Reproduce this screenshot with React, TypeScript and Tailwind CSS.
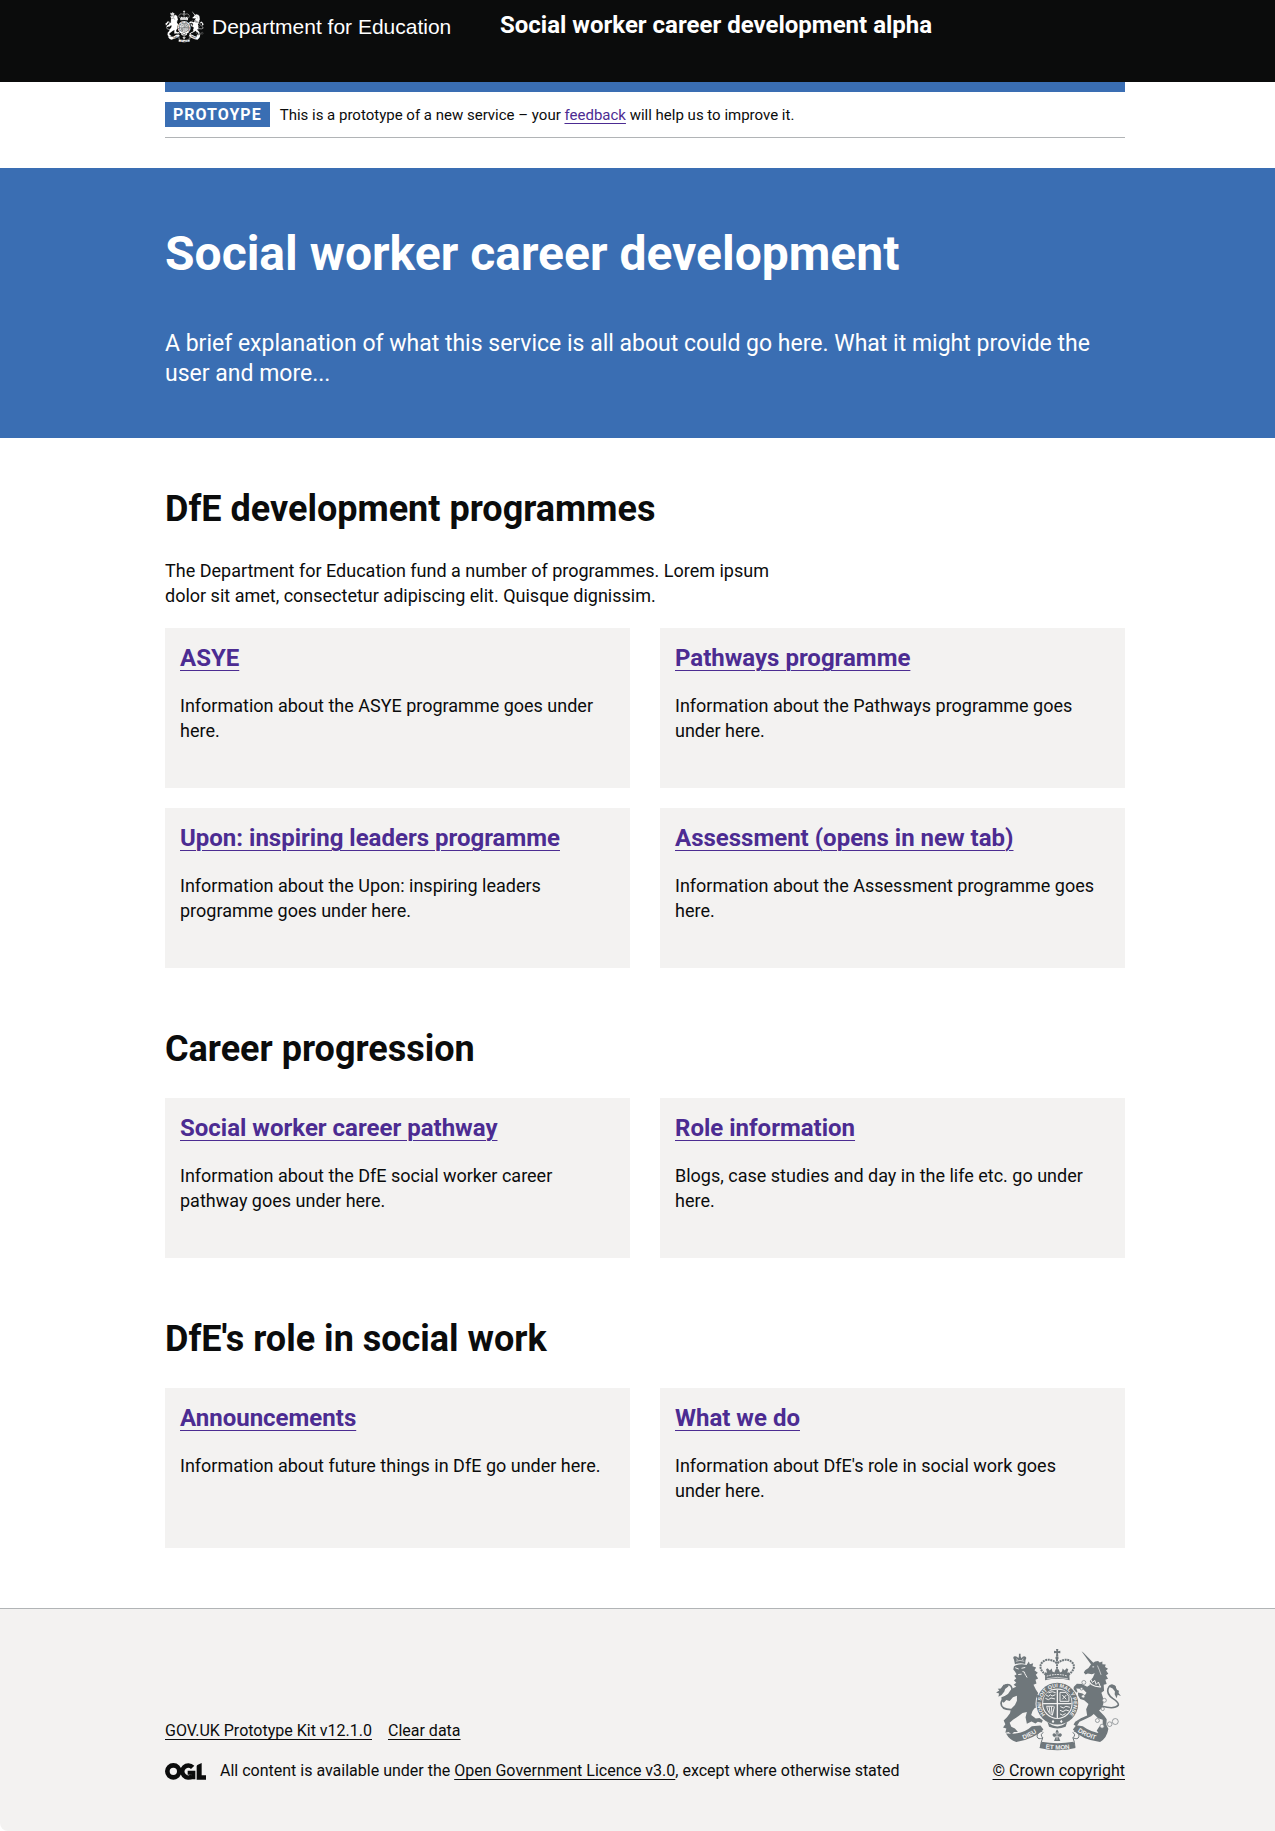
import React from "react";

type CardData = { title: string; text: string; newTab?: boolean };

const programmes: CardData[] = [
  { title: "ASYE", text: "Information about the ASYE programme goes under here." },
  { title: "Pathways programme", text: "Information about the Pathways programme goes under here." },
  {
    title: "Upon: inspiring leaders programme",
    text: "Information about the Upon: inspiring leaders programme goes under here.",
  },
  {
    title: "Assessment (opens in new tab)",
    text: "Information about the Assessment programme goes here.",
    newTab: true,
  },
];

const progression: CardData[] = [
  {
    title: "Social worker career pathway",
    text: "Information about the DfE social worker career pathway goes under here.",
  },
  { title: "Role information", text: "Blogs, case studies and day in the life etc. go under here." },
];

const role: CardData[] = [
  { title: "Announcements", text: "Information about future things in DfE go under here." },
  { title: "What we do", text: "Information about DfE's role in social work goes under here." },
];

/* Royal coat of arms: `ink` is the drawing, `paper` the colour cut out of it. */
function Crest({ ink, paper, id, className }: { ink: string; paper: string; id: string; className: string }) {
  return (
    <svg viewBox="50 56 377 308" className={className} aria-hidden="true" fill={ink} overflow="visible">
      <defs>
        <path id={`${id}-garter`} d="M202 257 A49 49 0 1 1 268 257" />
        <path id={`${id}-left`} d="M116 335 Q156 323 188 298" />
        <path id={`${id}-right`} d="M287 299 Q317 322 360 333" />
        <path id={`${id}-mid`} d="M186 354 Q235 365 286 354" />
      </defs>

      {/* lion */}
      <path d="M107 102 L104 88 Q99 80 106 78 Q114 77 117 84 L119 78 L119 70 H124 V78 L127 84 Q131 76 138 79 Q144 82 139 89 L138 101 Q122 97 107 102Z" />
      <g stroke={paper} strokeWidth="2" fill="none">
        <path d="M110 93 Q122 88 135 93" />
        <path d="M112 85 L115 90 M132 85 L129 90" />
      </g>
      <path d="M104 108 Q122 99 142 104 L149 94 L152 102 L162 99 L160 108 L171 112 L166 120 L176 128 L170 134 L177 145 L169 149 L172 160 L163 164 L170 178 L177 189 L183 204 L186 222 Q178 232 166 235 L160 243 L156 255 L170 266 L181 264 L191 271 L188 279 L176 276 L169 281 L157 275 L143 282 L139 262 L143 246 L130 249 L117 259 L101 270 L91 279 L96 291 L107 296 L116 307 L104 307 L97 314 L88 307 L78 309 L81 296 L71 293 L78 283 L73 272 L83 262 L92 250 L95 237 L107 225 L113 212 L113 197 L101 202 L91 213 L81 210 L73 218 L67 213 L66 202 L76 198 L86 192 L93 181 L102 174 L111 170 L103 164 L111 158 L104 150 L111 145 L105 137 L112 132 L107 124 L102 118Z" />
      <g stroke={paper} strokeWidth="3" fill="none" strokeLinecap="round">
        <path d="M109 113 L117 116 M128 114 L137 112" />
        <path d="M131 124 Q138 124 137 131 Q140 136 143 141 M118 133 L126 132" />
      </g>
      <path
        d="M95 239 Q65 239 65 220 Q67 206 84 198 Q100 188 98 175 Q94 160 78 165 Q66 172 62 184"
        fill="none"
        stroke={ink}
        strokeWidth="5"
      />
      <path d="M87 163 L72 164 L66 175 L55 176 L60 181 L50 187 L59 190 L57 200 Q69 195 75 184 Q77 174 87 169Z" />

      {/* unicorn */}
      <path d="M308 63 L314 67 L345 99 L338 104Z" />
      <path d="M337 102 L349 94 L358 92 L363 97 L371 94 L371 102 L381 103 L379 110 L388 116 L382 121 L389 131 L382 135 L388 146 L380 149 L384 162 L375 164 L376 182 L368 188 L373 203 L374 221 L369 234 L361 242 L377 258 L384 268 L383 285 L389 297 L383 311 L377 323 L364 317 L354 302 L362 290 L372 286 L372 270 L358 265 L345 252 L337 259 L320 267 L302 276 L293 290 L284 284 L289 276 L306 265 L325 257 L322 238 L329 222 L316 211 L304 207 L298 197 L297 187 L311 190 L317 197 L323 188 L312 177 L292 175 L296 184 L289 190 L283 180 L285 170 L294 161 L309 162 L325 170 L333 165 L333 153 L342 143 L348 129 L339 132 L327 130 L320 133 L315 127 L319 120 L329 113Z" />
      <g fill="none" stroke={paper} strokeWidth="4">
        <path d="M327 151 L338 163 Q350 171 367 170" />
        <path d="M335 146 L341 157 L348 151 L352 163 L359 156 L364 168" strokeWidth="3" />
        <path d="M356 106 L362 120 L367 134" strokeWidth="2" />
        <path d="M341 110 H346" strokeWidth="3" />
      </g>
      <path
        d="M370 229 Q408 239 419 226 Q422 218 402 205 Q383 191 388 176 Q396 157 409 172 Q413 180 414 190"
        fill="none"
        stroke={ink}
        strokeWidth="5"
      />
      <path d="M389 169 Q401 158 411 168 L413 178 L421 182 L420 189 L427 198 L417 194 L414 205 L408 193 L409 184 L402 175Z" />
      <g fill={paper} stroke={ink} strokeWidth="2">
        <circle cx="315" cy="157" r="6" />
        <circle cx="308" cy="176" r="4" />
        <circle cx="313" cy="199" r="5" />
        <circle cx="377" cy="211" r="6" />
        <circle cx="372" cy="237" r="5" />
        <circle cx="356" cy="272" r="6" />
        <circle cx="370" cy="289" r="6" />
        <circle cx="393" cy="283" r="7" />
        <circle cx="410" cy="275" r="9" />
      </g>

      {/* royal crown */}
      <path d="M231 56 H238 L237 63 L244 61 V69 L237 68 L238 79 H231 L232 68 L225 69 V61 L232 63Z" />
      <circle cx="234" cy="83" r="5" />
      <g fill="none" stroke={ink} strokeWidth="6" strokeDasharray="6 2">
        <path d="M201 134 Q177 117 187 99 Q203 80 229 95 L234 101" />
        <path d="M268 134 Q292 117 282 99 Q266 80 240 95 L234 101" />
        <path d="M234 86 V130" />
      </g>
      <path d="M198 126 L204 128 L201 117 L206 114 L212 121 L218 115 L220 124 L226 127 L230 117 H239 L243 127 L249 124 L251 115 L257 121 L263 114 L268 117 L265 128 L271 126 L272 150 Q235 142 198 150Z" />
      <path d="M203 138 Q235 128 266 138" fill="none" stroke={paper} strokeWidth="3" strokeDasharray="5 3" />
      <path d="M203 146 Q235 137 267 146" fill="none" stroke={paper} strokeWidth="2" />

      {/* scroll */}
      <path d="M101 312 Q137 309 158 289 L184 287 L193 299 Q164 328 111 337 Q91 331 80 311Z" />
      <path d="M282 299 L292 286 L312 289 Q337 308 371 311 L389 297 Q385 325 364 337 Q307 329 282 299Z" />
      <path d="M187 336 Q235 345 284 336 L290 355 Q235 369 181 355Z" />
      <g fill="none" stroke={ink} strokeWidth="3">
        <path d="M190 304 Q172 308 174 321 Q177 331 191 324 Q185 337 184 352" />
        <path d="M285 304 Q303 308 300 321 Q297 331 282 324 Q288 337 288 352" />
        <path d="M191 324 Q181 314 193 308 M282 324 Q293 314 281 308" />
      </g>
      <g
        fill={paper}
        fontFamily="Liberation Sans, sans-serif"
        fontWeight="700"
        fontSize="19"
        textAnchor="middle"
      >
        <text>
          <textPath href={`#${id}-left`} startOffset="50%">
            DIEU
          </textPath>
        </text>
        <text>
          <textPath href={`#${id}-right`} startOffset="50%">
            DROIT
          </textPath>
        </text>
        <text>
          <textPath href={`#${id}-mid`} startOffset="50%">
            ET MON
          </textPath>
        </text>
      </g>
      <path d="M234 299 Q242 306 237 315 Q246 306 249 316 Q246 324 239 322 L244 334 H225 L230 322 Q223 324 220 316 Q223 306 232 315 Q227 306 234 299Z" />
      <path d="M234 307 V330 M227 321 H242" stroke={paper} strokeWidth="2" />

      {/* garter and shield */}
      <circle cx="235" cy="221" r="66" fill={paper} />
      <circle cx="235" cy="221" r="63" />
      <path d="M167 187 L189 206 L195 217 L184 220 L177 212Z" />
      <path d="M205 276 Q235 304 265 276 L260 291 Q235 301 210 291Z" />
      <circle cx="235" cy="221" r="46" fill={paper} />
      <text
        fill={paper}
        fontFamily="Liberation Sans, sans-serif"
        fontWeight="700"
        fontSize="16"
        textAnchor="middle"
      >
        <textPath href={`#${id}-garter`} startOffset="50%">
          HONI SOIT QUI MAL Y PENSE
        </textPath>
      </text>
      <path d="M218 275 l4 5 l4 -5 l-4 -5Z M243 275 l4 5 l4 -5 l-4 -5Z" fill={paper} />
      <path d="M192 221 Q192 179 235 179 Q278 179 278 221 Q276 257 235 265 Q194 257 192 221Z" />
      <path d="M235 179 V266 M192 221 H278" stroke={paper} strokeWidth="4" />
      <g fill="none" stroke={paper} strokeWidth="3">
        <path d="M201 195 L208 199 L214 194 L219 198 L229 194 M199 205 L208 209 L216 204 L228 207 M208 188 L220 185 L230 188" />
        <path d="M244 230 L253 234 L261 229 L273 232 M243 241 L252 245 L261 240 L270 243 M243 252 L251 256 L260 251" />
        <path d="M243 187 H261 L270 199 V214 H243Z M250 195 L262 208 M262 195 L250 208" />
        <path d="M202 229 H224 M203 230 Q207 251 220 256 L226 230 M210 230 L213 249 M217 230 L219 252" />
      </g>
    </svg>
  );
}

function OglLogo() {
  return (
    <svg
      viewBox="0 0 123 51"
      className="h-[17px] w-[41px] shrink-0"
      role="img"
      aria-label="OGL"
      fill="none"
      stroke="#0b0c0c"
    >
      <circle cx="25" cy="25" r="18" strokeWidth="14" />
      <path d="M83 13 A18 18 0 1 0 82 39" strokeWidth="14" />
      <path d="M68 29 H85 V49" strokeWidth="12" />
      <path d="M97 6 L110 0 V37 H123 V50 H95 V9Z" fill="#0b0c0c" stroke="none" />
    </svg>
  );
}

function Card({ title, text, newTab }: CardData) {
  return (
    <li className="min-h-[160px] bg-[#f3f2f1] p-[15px]">
      <h3 className="mb-5 text-[24px] leading-[30px] font-bold">
        <a
          href="#"
          target={newTab ? "_blank" : undefined}
          className="text-[#4c2c92] underline decoration-1 underline-offset-4"
        >
          {title}
        </a>
      </h3>
      <p className="pr-3 text-[18px] leading-[25px]">{text}</p>
    </li>
  );
}

function Section({ title, intro, cards }: { title: string; intro?: string; cards: CardData[] }) {
  return (
    <section className="mb-[60px]">
      <h2 className="mb-[28px] text-[36px] leading-[42px] font-bold">{title}</h2>
      {intro && <p className="mb-5 text-[18px] leading-[25px] md:w-2/3 md:pr-[15px]">{intro}</p>}
      <ul className="grid gap-x-[30px] gap-y-5 md:grid-cols-2">
        {cards.map((card) => (
          <Card key={card.title} {...card} />
        ))}
      </ul>
    </section>
  );
}

const container = "mx-auto max-w-[975px] pl-[15px]";

export default function App() {
  return (
    <div className="bg-white font-['Roboto','Liberation_Sans',sans-serif] text-[#0b0c0c]">
      <header className="bg-[#0b0c0c] pt-[10px] pb-[39px] text-white">
        <div className={container}>
          <div className="flex flex-wrap items-start gap-[15px]">
            <a href="#" className="flex w-[320px] items-center gap-2">
              <Crest ink="#ffffff" paper="#0b0c0c" id="header" className="h-[33px] w-[39px]" />
              <span className="font-['Liberation_Sans',sans-serif] text-[21px] leading-[33px]">
                Department for Education
              </span>
            </a>
            <a href="#" className="text-[24px] leading-[30px] font-bold">
              Social worker career development alpha
            </a>
          </div>
        </div>
      </header>

      <div className={container}>
        <div className="h-[10px] bg-[#3a6eb3]" />
        <div className="flex items-center gap-[10px] border-b border-[#b1b4b6] py-[10px]">
          <strong className="bg-[#3a6eb3] px-2 text-[16px] leading-[25px] font-bold tracking-[1px] text-white">
            PROTOYPE
          </strong>
          <p className="text-[15px] leading-[20px]">
            This is a prototype of a new service – your{" "}
            <a href="#" className="text-[#4c2c92] underline decoration-1 underline-offset-3">
              feedback
            </a>{" "}
            will help us to improve it.
          </p>
        </div>
      </div>

      <div className="mt-[30px] bg-[#3a6eb3] pt-[60px] pb-[49px] text-white">
        <div className={container}>
          <h1 className="mb-[49px] text-[48px] leading-[52px] font-bold">Social worker career development</h1>
          <p className="text-[23px] leading-[30px]">
            A brief explanation of what this service is all about could go here. What it might provide the user and
            more...
          </p>
        </div>
      </div>

      <main className={`${container} pt-[50px]`}>
        <Section
          title="DfE development programmes"
          intro="The Department for Education fund a number of programmes. Lorem ipsum dolor sit amet, consectetur adipiscing elit. Quisque dignissim."
          cards={programmes}
        />
        <Section title="Career progression" cards={progression} />
        <Section title="DfE's role in social work" cards={role} />
      </main>

      <footer className="rounded-bl-lg border-t border-[#b1b4b6] bg-[#f3f2f1] pt-[40px] pb-[50px] text-[16px] leading-[20px]">
        <div className={`${container} flex flex-wrap items-end justify-between gap-5`}>
          <div>
            <ul className="mb-5 flex gap-4">
              <li>
                <a href="#" className="underline decoration-1 underline-offset-3">
                  GOV.UK Prototype Kit v12.1.0
                </a>
              </li>
              <li>
                <a href="#" className="underline decoration-1 underline-offset-3">
                  Clear data
                </a>
              </li>
            </ul>
            <div className="flex items-center gap-[14px]">
              <OglLogo />
              <p>
                All content is available under the{" "}
                <a href="#" className="underline decoration-1 underline-offset-3">
                  Open Government Licence v3.0
                </a>
                , except where otherwise stated
              </p>
            </div>
          </div>
          <a href="#" className="flex flex-col items-center gap-[10px] underline decoration-1 underline-offset-3">
            <Crest ink="#6f777b" paper="#f3f2f1" id="footer" className="h-[102px] w-[125px]" />
            © Crown copyright
          </a>
        </div>
      </footer>
    </div>
  );
}
